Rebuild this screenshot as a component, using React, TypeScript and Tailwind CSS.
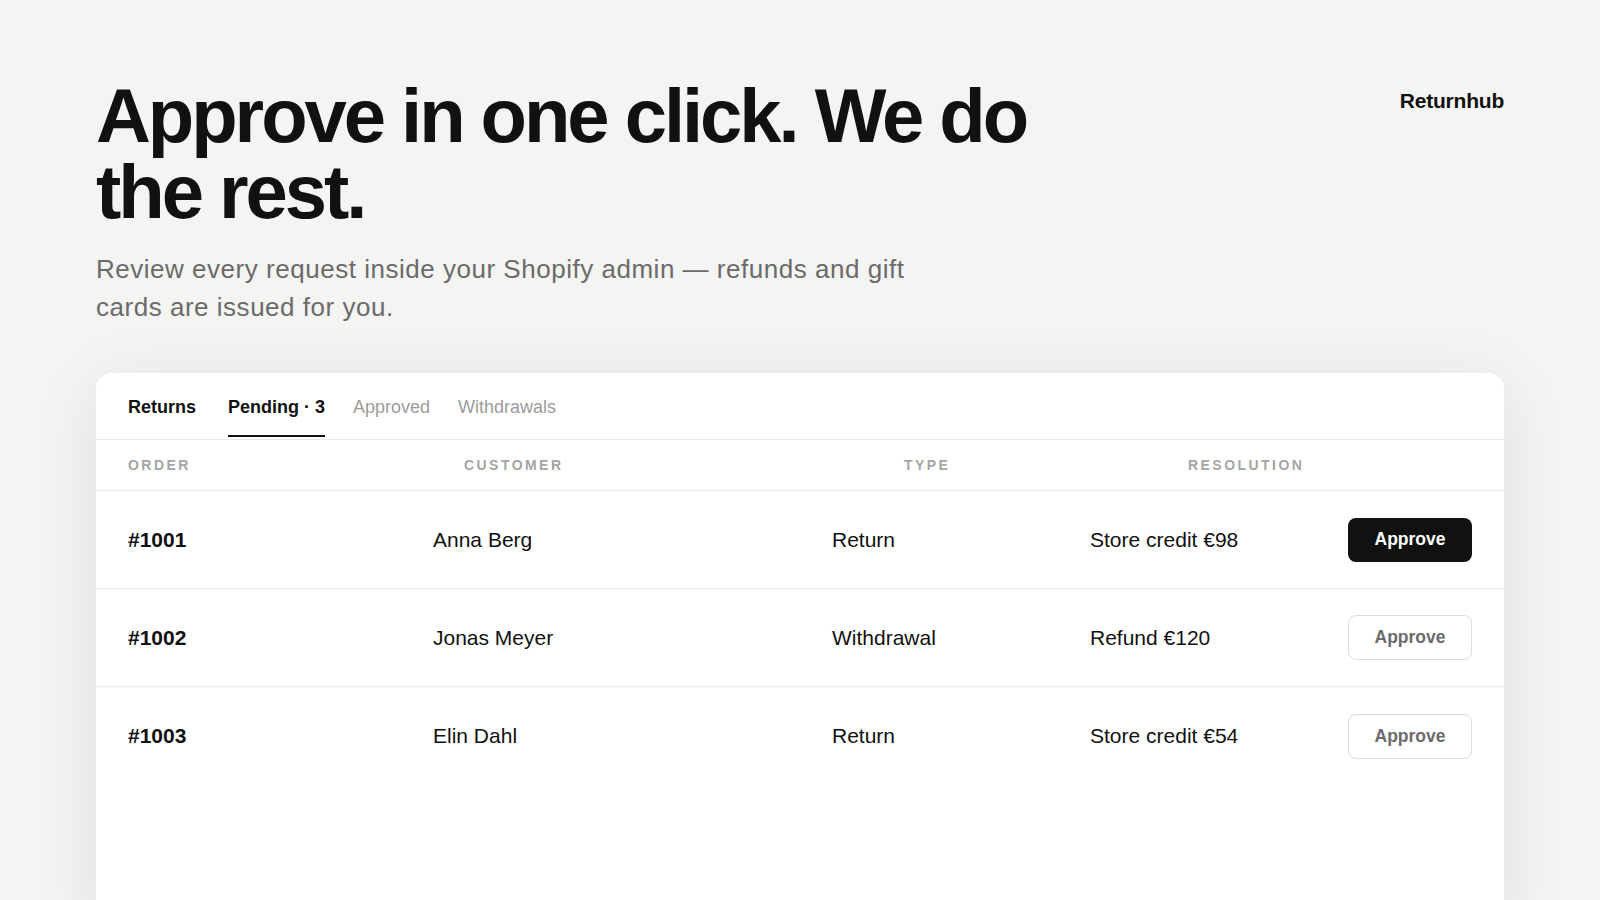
import React from "react";

type Row = {
  order: string;
  customer: string;
  type: string;
  resolution: string;
  primary?: boolean;
};

const rows: Row[] = [
  { order: "#1001", customer: "Anna Berg", type: "Return", resolution: "Store credit €98", primary: true },
  { order: "#1002", customer: "Jonas Meyer", type: "Withdrawal", resolution: "Refund €120" },
  { order: "#1003", customer: "Elin Dahl", type: "Return", resolution: "Store credit €54" },
];

const tabs = [
  { label: "Pending · 3", active: true },
  { label: "Approved", active: false },
  { label: "Withdrawals", active: false },
];

function ReturnsTable() {
  return (
    <div className="mt-[47px] rounded-2xl bg-white shadow-[0_12px_70px_rgba(0,0,0,0.09)] pb-[140px]">
      {/* tab strip */}
      <div className="h-[67px] border-b border-[#ececec] px-8 flex">
        <div className="flex items-center pt-[6px] mb-[2px] border-b-2 border-transparent mr-8 text-[18px] font-bold text-[#111]">
          Returns
        </div>
        <div className="flex gap-7">
          {tabs.map((t) => (
            <div
              key={t.label}
              className={
                t.active
                  ? "flex items-center pt-[6px] mb-[2px] border-b-2 border-[#111] text-[18px] font-bold text-[#111]"
                  : "flex items-center pt-[6px] mb-[2px] border-b-2 border-transparent text-[18px] text-[#9c9c9c]"
              }
            >
              {t.label}
            </div>
          ))}
        </div>
      </div>

      {/* column headings */}
      <div className="h-[51px] border-b border-[#ececec] px-8 grid grid-cols-[336px_440px_284px_1fr] items-center text-[14px] font-bold tracking-[0.175em] text-[#a5a5a5]">
        <span>ORDER</span>
        <span>CUSTOMER</span>
        <span>TYPE</span>
        <span>RESOLUTION</span>
      </div>

      {rows.map((r, i) => (
        <div
          key={r.order}
          className={
            "h-[98px] px-8 grid grid-cols-[305px_399px_258px_1fr_124px] items-center text-[21px] text-[#111] " +
            (i < rows.length - 1 ? "border-b border-[#ececec]" : "")
          }
        >
          <span className="font-bold">{r.order}</span>
          <span>{r.customer}</span>
          <span>{r.type}</span>
          <span>{r.resolution}</span>
          {r.primary ? (
            <button
              type="button"
              className="h-[44px] w-[124px] rounded-lg bg-[#111] text-white text-[17.5px] font-bold"
            >
              Approve
            </button>
          ) : (
            <button
              type="button"
              className="h-[45px] w-[124px] rounded-lg border border-[#dcdcdc] bg-white text-[#6b6b6b] text-[17.5px] font-bold"
            >
              Approve
            </button>
          )}
        </div>
      ))}
    </div>
  );
}

export default function App() {
  return (
    <div
      className="min-h-screen bg-[#f4f4f2] px-24 pt-[78px] text-[#111]"
      style={{ fontFamily: '"Liberation Sans", Arial, sans-serif' }}
    >
      <div className="flex justify-between items-start">
        <div>
          <h1 className="max-w-[1000px] text-[76px] leading-[76px] font-bold tracking-[-0.04em] text-[#111]">
            Approve in one click. We do the rest.
          </h1>
          <p className="mt-[20px] max-w-[850px] text-[26px] leading-[38px] tracking-[0.02em] text-[#6b6b6b]">
            Review every request inside your Shopify admin — refunds and gift cards are issued for you.
          </p>
        </div>
        <div className="mt-[9px] text-[21px] leading-[28px] font-bold tracking-[-0.01em] text-[#111]">
          Returnhub
        </div>
      </div>

      <ReturnsTable />
    </div>
  );
}
